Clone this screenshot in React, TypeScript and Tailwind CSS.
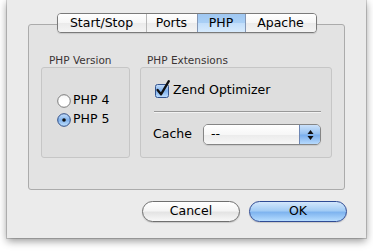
import React from "react";

function Radio({ checked }: { checked: boolean }) {
  if (checked) {
    return (
      <svg width="14" height="14" viewBox="0 0 14 14" className="shrink-0">
        <defs>
          <linearGradient id="rb" x1="0" y1="0" x2="0" y2="1">
            <stop offset="0" stopColor="#c8e0fa" />
            <stop offset="0.5" stopColor="#80b2ec" />
            <stop offset="1" stopColor="#c2e2ff" />
          </linearGradient>
        </defs>
        <circle cx="7" cy="7" r="6.3" fill="url(#rb)" stroke="#2f4d86" strokeWidth="1" />
        <circle cx="7" cy="7" r="1.8" fill="#111" />
      </svg>
    );
  }
  return (
    <svg width="14" height="14" viewBox="0 0 14 14" className="shrink-0">
      <defs>
        <linearGradient id="rw" x1="0" y1="0" x2="0" y2="1">
          <stop offset="0" stopColor="#f4f4f4" />
          <stop offset="0.5" stopColor="#ffffff" />
          <stop offset="1" stopColor="#ffffff" />
        </linearGradient>
      </defs>
      <circle cx="7" cy="7" r="6.3" fill="url(#rw)" stroke="#7b7b7b" strokeWidth="1" />
    </svg>
  );
}

function Check() {
  return (
    <svg width="17" height="18" viewBox="0 0 17 18" className="shrink-0">
      <defs>
        <linearGradient id="cb" x1="0" y1="0" x2="0" y2="1">
          <stop offset="0" stopColor="#c6defa" />
          <stop offset="0.5" stopColor="#7eb0ec" />
          <stop offset="1" stopColor="#c0e0ff" />
        </linearGradient>
      </defs>
      <rect x="1.5" y="4.5" width="13" height="13" rx="2" fill="url(#cb)" stroke="#34548f" strokeWidth="1" />
      <path d="M3.6 10 L7 14.3 L14.8 1.2" fill="none" stroke="#111" strokeWidth="2.3" strokeLinecap="round" strokeLinejoin="round" />
    </svg>
  );
}

const tabBase =
  "flex items-center justify-center text-[12.5px] leading-none bg-[linear-gradient(to_bottom,#ffffff_0%,#f6f6f6_50%,#ebebeb_52%,#f4f4f4_100%)]";

export default function App() {
  return (
    <div className="w-[373px] h-[252px] bg-white font-['DejaVu_Sans',sans-serif] text-black overflow-hidden">
      <div className="ml-[7px] w-[359px] h-[238px] bg-[#ebebeb] shadow-[0_0_0_1px_rgba(0,0,0,0.16),0_3px_8px_rgba(0,0,0,0.42)] pt-[13px] px-[21px] flex flex-col">
        <div className="relative z-10 flex justify-center h-[20px]">
          <div className="flex h-[20px] rounded-[4px] border border-[#7a7a7a] overflow-hidden shadow-[0_1px_1px_rgba(0,0,0,0.12)]">
            <div className={`${tabBase} w-[88px]`}>Start/Stop</div>
            <div className={`${tabBase} w-[51px] border-l border-[#b8b8b8]`}>Ports</div>
            <div className="flex items-center justify-center w-[48px] border-l border-[#8497b5] text-[12.5px] leading-none bg-[linear-gradient(to_bottom,#9fc7f1_0%,#a9cff5_48%,#c2defa_52%,#d7ebfd_100%)]">
              PHP
            </div>
            <div className={`${tabBase} w-[71px] border-l border-[#8497b5]`}>Apache</div>
          </div>
        </div>

        <div className="-mt-[9px] h-[166px] border border-[#ababab] rounded-[3px] bg-[#e3e3e3] pt-[29px] px-[12px] flex gap-[10px]">
          <div className="w-[89px] flex flex-col">
            <div className="h-[13px] pl-[8px] text-[10.5px] leading-[13px] text-[#3a3434]">PHP Version</div>
            <div className="h-[91px] border border-[#c6c6c6] rounded-[3px] bg-[#dedede] pt-[23px] pl-[15px] flex flex-col">
              <div className="h-[19px] flex items-center gap-[2px]">
                <Radio checked={false} />
                <span className="text-[12.5px] leading-none">PHP 4</span>
              </div>
              <div className="h-[19px] flex items-center gap-[2px]">
                <Radio checked={true} />
                <span className="text-[12.5px] leading-none">PHP 5</span>
              </div>
            </div>
          </div>

          <div className="w-[192px] flex flex-col">
            <div className="h-[13px] pl-[7px] text-[10.5px] leading-[13px] text-[#3a3434]">PHP Extensions</div>
            <div className="h-[91px] border border-[#c6c6c6] rounded-[3px] bg-[#dedede] pt-[12px] pl-[13px] pr-[10px] flex flex-col">
              <div className="h-[18px] flex items-center gap-[2px]">
                <Check />
                <span className="text-[12.5px] leading-none mt-[2px]">Zend Optimizer</span>
              </div>
              <div className="mt-[13px] h-[1px] bg-[#989898] shadow-[0_1px_0_rgba(255,255,255,0.6)]" />
              <div className="mt-[12px] h-[21px] flex items-center justify-between">
                <span className="text-[12.5px] leading-none -ml-[1px]">Cache</span>
                <div className="w-[118px] h-[21px] rounded-[5px] border border-[#858585] flex overflow-hidden shadow-[0_1px_1px_rgba(0,0,0,0.1)]">
                  <div className="flex-1 pl-[7px] flex items-center text-[12.5px] leading-none bg-[linear-gradient(to_bottom,#ffffff_0%,#f7f7f7_50%,#ececec_55%,#f7f7f7_100%)]">
                    --
                  </div>
                  <div className="w-[21px] border-l border-[#6d86b3] flex items-center justify-center bg-[linear-gradient(to_bottom,#cbe1fa_0%,#94c0f0_48%,#78adec_52%,#b7dafd_100%)]">
                    <svg width="7" height="12" viewBox="0 0 7 12">
                      <path d="M3.5 1 L6.5 5 L0.5 5 Z" fill="#111" />
                      <path d="M3.5 11 L6.5 7 L0.5 7 Z" fill="#111" />
                    </svg>
                  </div>
                </div>
              </div>
            </div>
          </div>
        </div>

        <div className="mt-[11px] -mr-[2px] flex justify-end gap-[9px]">
          <div className="w-[98px] h-[21px] rounded-full border border-[#6f6f6f] flex items-center justify-center text-[12.5px] leading-none shadow-[0_1px_1px_rgba(0,0,0,0.15)] bg-[linear-gradient(to_bottom,#ffffff_0%,#f5f5f5_45%,#e4e4e4_55%,#f8f8f8_100%)]">
            Cancel
          </div>
          <div className="w-[98px] h-[21px] rounded-full border border-[#2f4b94] flex items-center justify-center text-[12.5px] leading-none shadow-[0_1px_1px_rgba(0,0,0,0.15)] bg-[linear-gradient(to_bottom,#d3e7fc_0%,#a3ccf5_45%,#7fb4ef_55%,#b5dcff_100%)]">
            OK
          </div>
        </div>
      </div>
    </div>
  );
}
